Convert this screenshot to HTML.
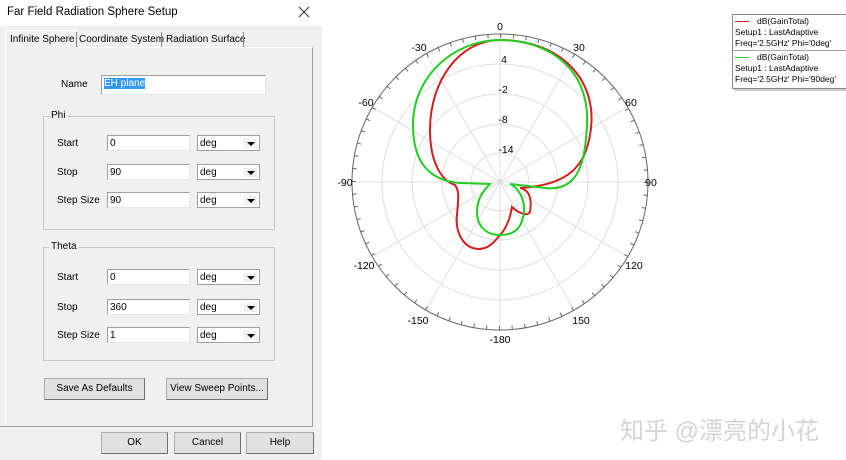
<!DOCTYPE html>
<html><head><meta charset="utf-8"><style>
body{margin:0;width:846px;height:460px;background:#fff;position:relative;overflow:hidden;font-family:"Liberation Sans",Arial,sans-serif;font-size:10px;color:#000}
.a{position:absolute;white-space:nowrap}
.dlg{left:0;top:0;width:322px;height:460px;background:#f0f0f0}
.title{left:0;top:0;width:322px;height:26px;background:#fff;font-size:11.5px}
.panel{left:5px;top:47px;width:306px;height:378px;border:1px solid #a0a0a0;border-left-color:#fff;border-top-color:#fff;background:#f0f0f0}
.tab{top:33px;height:14px;line-height:14px;font-size:10px}
.in{background:#fff;border:1px solid #a0a0a0;border-right-color:#e8e8e8;border-bottom-color:#e8e8e8;height:16px;line-height:15px;padding-left:2px;box-sizing:border-box}
.sel{background:#fff;border:1px solid #a0a0a0;height:16px;line-height:15px;padding-left:2px;box-sizing:border-box}
.arr{position:absolute;right:2px;top:3px;width:13px;height:9px;background:#f0f0f0}
.arr:after{content:"";position:absolute;left:3px;top:3px;border-left:4px solid transparent;border-right:4px solid transparent;border-top:4px solid #000}
.grp{border:1px solid #c8c8c8;box-sizing:border-box}
.btn{background:#e1e1e1;border:1px solid #adadad;box-sizing:border-box;text-align:center;border-right-color:#707070;border-bottom-color:#707070}
</style></head><body>
<div class="a dlg"></div>
<div class="a title"><span class="a" style="left:7px;top:6px">Far Field Radiation Sphere Setup</span>
<svg class="a" style="left:298px;top:6px" width="12" height="12"><path d="M1 1L11 11M11 1L1 11" stroke="#333" stroke-width="1"/></svg></div>
<div class="a panel"></div>
<div class="a" style="left:5px;top:30px;width:70px;height:18px;background:#f0f0f0;border:1px solid #fff;border-bottom:none"></div>
<span class="a tab" style="left:10px">Infinite Sphere</span>
<div class="a" style="left:76px;top:32px;width:1px;height:15px;background:#888"></div>
<span class="a tab" style="left:79px">Coordinate System</span>
<div class="a" style="left:161px;top:32px;width:1px;height:15px;background:#888"></div>
<span class="a tab" style="left:166px">Radiation Surface</span>
<div class="a" style="left:243px;top:32px;width:1px;height:15px;background:#888"></div>

<span class="a" style="left:61px;top:79px">Name</span>
<div class="a in" style="left:101px;top:75px;width:165px;height:20px"><span style="background:#3399ff;color:#fff">EH plane</span></div>

<div class="a grp" style="left:43px;top:116px;width:232px;height:114px"></div>
<span class="a" style="left:49px;top:110px;background:#f0f0f0;padding:0 2px">Phi</span>
<div class="a grp" style="left:43px;top:247px;width:232px;height:114px"></div>
<span class="a" style="left:49px;top:241px;background:#f0f0f0;padding:0 2px">Theta</span>

<span class="a" style="left:57px;top:138px">Start</span>
<span class="a" style="left:57px;top:167px">Stop</span>
<span class="a" style="left:57px;top:195px">Step Size</span>
<div class="a in" style="left:107px;top:135px;width:83px">0</div>
<div class="a in" style="left:107px;top:164px;width:83px">90</div>
<div class="a in" style="left:107px;top:192px;width:83px">90</div>
<div class="a sel" style="left:197px;top:135px;width:63px">deg<div class="arr"></div></div>
<div class="a sel" style="left:197px;top:164px;width:63px">deg<div class="arr"></div></div>
<div class="a sel" style="left:197px;top:192px;width:63px">deg<div class="arr"></div></div>

<span class="a" style="left:57px;top:272px">Start</span>
<span class="a" style="left:57px;top:302px">Stop</span>
<span class="a" style="left:57px;top:330px">Step Size</span>
<div class="a in" style="left:107px;top:269px;width:83px">0</div>
<div class="a in" style="left:107px;top:299px;width:83px">360</div>
<div class="a in" style="left:107px;top:327px;width:83px">1</div>
<div class="a sel" style="left:197px;top:269px;width:63px">deg<div class="arr"></div></div>
<div class="a sel" style="left:197px;top:299px;width:63px">deg<div class="arr"></div></div>
<div class="a sel" style="left:197px;top:327px;width:63px">deg<div class="arr"></div></div>

<div class="a btn" style="left:44px;top:378px;width:101px;height:22px;line-height:20px">Save As Defaults</div>
<div class="a btn" style="left:166px;top:378px;width:102px;height:22px;line-height:20px">View Sweep Points...</div>
<div class="a" style="left:0;top:426px;width:312px;height:1px;background:#a0a0a0"></div>
<div class="a btn" style="left:101px;top:432px;width:67px;height:22px;line-height:20px">OK</div>
<div class="a btn" style="left:174px;top:432px;width:67px;height:22px;line-height:20px">Cancel</div>
<div class="a btn" style="left:246px;top:432px;width:68px;height:22px;line-height:20px">Help</div>

<svg class="a" style="left:0;top:0" width="846" height="460" font-family="Liberation Sans,Arial,sans-serif" font-size="10.5">
<g fill="none" stroke="#ddd" stroke-width="1">
<circle cx="500" cy="182" r="29"/><circle cx="500" cy="182" r="58"/><circle cx="500" cy="182" r="88"/><circle cx="500" cy="182" r="118"/>
<path d="M500 34V330M352 182H648M426 54L574 310M374 108L626 256M374 256L626 108M426 310L574 54"/>
</g>
<circle cx="500" cy="182" r="148" fill="none" stroke="#666" stroke-width="1"/>
<circle cx="500" cy="182" r="146" fill="none" stroke="#666" stroke-width="4" stroke-dasharray="1 11.74"/>
<g text-anchor="middle" fill="#000">
<text x="500" y="30">0</text><text x="579" y="51">30</text><text x="631" y="106">60</text><text x="651" y="186">90</text>
<text x="634" y="269">120</text><text x="581" y="324">150</text><text x="500" y="343">-180</text>
<text x="418" y="324">-150</text><text x="364" y="269">-120</text><text x="345" y="186">-90</text>
<text x="366" y="106">-60</text><text x="419" y="51">-30</text>
<text x="504" y="63">4</text><text x="503" y="93">-2</text><text x="503" y="123">-8</text><text x="506" y="153">-14</text>
</g>
<path d="M500 40C560 40 600 80 590 135C585 165 570 185 520 188C530 190 532 200 530 212C526 218 515 210 512 207C510 220 505 230 500 235C492 245 487 249 478 249C462 248 455 230 457 215C458 200 460 192 455 185C440 180 430 160 430 130C430 80 460 40 500 40Z" fill="none" stroke="#d02020" stroke-width="2"/>
<path d="M500 40C550 40 590 70 587 125C585 160 580 192 545 188L510 184C515 186 525 195 524 212C522 228 515 235 500 235C485 235 477 225 477 212C477 198 484 190 490 184L460 183C420 180 413 150 413 125C413 75 455 40 500 40Z" fill="none" stroke="#22cc22" stroke-width="2"/>
</svg>

<div class="a" style="left:732px;top:14px;width:113px;height:73px;border:1px solid #888;background:#fff;font-size:8.5px;line-height:11px;box-shadow:2px 2px 0 #ccc">
<div style="padding:1px 2px 0;height:34px;border-bottom:1px solid #aaa"><span style="display:inline-block;width:14px;height:1px;background:#d02020;vertical-align:middle;margin-right:8px"></span>dB(GainTotal)<br>Setup1 : LastAdaptive<br>Freq='2.5GHz' Phi='0deg'</div>
<div style="padding:1px 2px 0"><span style="display:inline-block;width:14px;height:1px;background:#22cc22;vertical-align:middle;margin-right:8px"></span>dB(GainTotal)<br>Setup1 : LastAdaptive<br>Freq='2.5GHz' Phi='90deg'</div>
</div>
<div class="a" style="left:620px;top:411px;font-size:24px;color:#d4d4d4;font-family:'Liberation Sans','Noto Sans CJK SC',sans-serif;white-space:nowrap">知乎 @漂亮的小花</div>
</body></html>
